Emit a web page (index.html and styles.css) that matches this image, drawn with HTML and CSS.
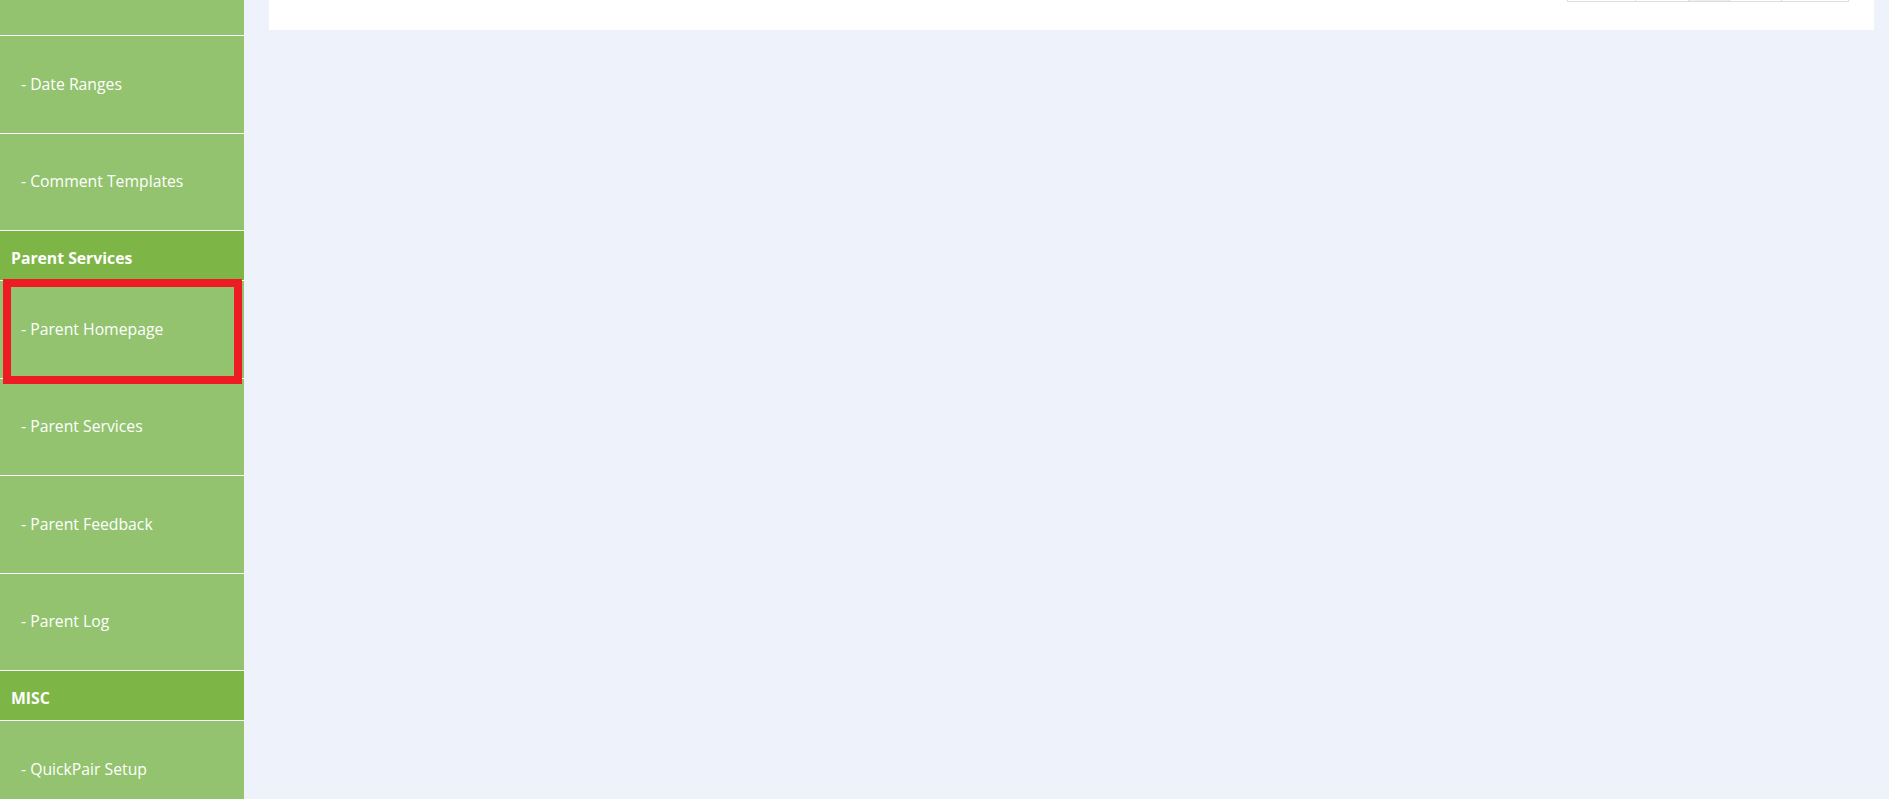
FILE: index.html
```html
<!DOCTYPE html>
<html lang="en">
<head>
    <meta charset="UTF-8">
    <meta name="viewport" content="width=device-width, initial-scale=1.0">
    <title>Admin - Parent Services</title>
    <link rel="stylesheet" href="styles.css">
</head>
<body>
    <div class="layout">
        <!-- Sidebar -->
        <nav class="sidebar">
            <ul class="menu">
                <li class="item"></li>
                <li class="item"><a href="#">- Date Ranges</a></li>
                <li class="item"><a href="#">- Comment Templates</a></li>
                <li class="group">Parent Services</li>
                <li class="item highlight"><a href="#">- Parent Homepage</a></li>
                <li class="item"><a href="#">- Parent Services</a></li>
                <li class="item"><a href="#">- Parent Feedback</a></li>
                <li class="item"><a href="#">- Parent Log</a></li>
                <li class="group">MISC</li>
                <li class="item"><a href="#">- QuickPair Setup</a></li>
            </ul>
        </nav>

        <!-- Main content -->
        <main class="content">
            <div class="card">
                <ul class="pager">
                    <li class="first"></li>
                    <li class="prev"></li>
                    <li class="current"></li>
                    <li class="next"></li>
                    <li class="last"></li>
                </ul>
            </div>
        </main>
    </div>
</body>
</html>
```
FILE: styles.css
```css
* {
    margin: 0;
    padding: 0;
    box-sizing: border-box;
}
body {
    font-family: 'Open Sans', 'Liberation Sans', sans-serif;
    background-color: #eef2fa;
    height: 100vh;
    overflow: hidden;
}
.layout {
    display: flex;
    height: 100vh;
}
.sidebar {
    width: 244px;
    flex-shrink: 0;
    background-color: #93c36e;
    overflow: hidden;
}
.menu {
    list-style: none;
    margin-top: -61.5px;
}
.item {
    position: relative;
    height: 97.5px;
    border-bottom: 1px solid #fff;
    display: flex;
    align-items: center;
}
.item a {
    color: #fff;
    text-decoration: none;
    font-size: 15.75px;
    padding-left: 21px;
    padding-bottom: 1px;
}
.group {
    height: 50px;
    background-color: #7db646;
    border-bottom: 1px solid #fff;
    color: #fff;
    font-weight: bold;
    font-size: 15.75px;
    padding: 16px 0 0 11px;
}
.highlight::after {
    content: '';
    position: absolute;
    top: -2px;
    left: 3px;
    right: 2px;
    bottom: -6.5px;
    border: 8px solid #ed1c24;
}
.content {
    flex: 1;
    padding: 0 15px 0 25px;
}
.card {
    background-color: #fff;
    margin-top: -54px;
    padding: 20px 25px 28px;
    display: flex;
    justify-content: flex-end;
}
.pager {
    list-style: none;
    display: flex;
    height: 36px;
    border: 1px solid #ddd;
    border-right: none;
}
.pager li {
    border-right: 1px solid #ddd;
}
.pager .first { width: 68px; }
.pager .prev { width: 53px; }
.pager .current { width: 41px; background-color: #eee; }
.pager .next { width: 52px; }
.pager .last { width: 67px; }
```
